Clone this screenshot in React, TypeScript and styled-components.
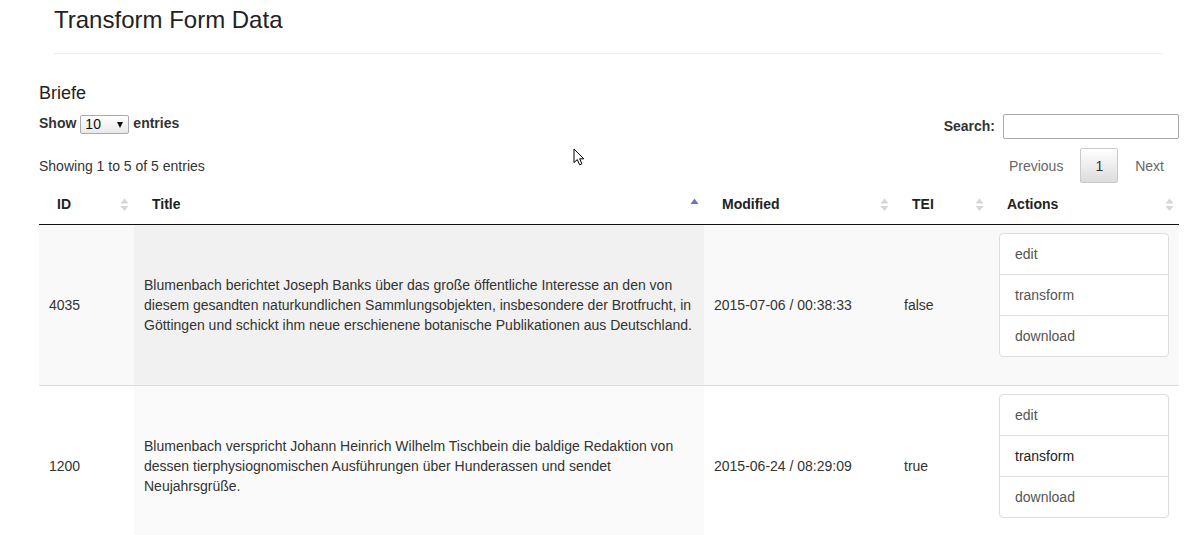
import React from "react";
import styled, { createGlobalStyle, css } from "styled-components";

const GlobalStyle = createGlobalStyle`
  html, body { margin: 0; padding: 0; background: #fff; }
  body {
    font-family: "Liberation Sans", Arial, Helvetica, sans-serif;
    font-size: 14px;
    line-height: 1.42857;
    color: #333;
  }
  * { box-sizing: border-box; }
`;

const Page = styled.div`
  position: relative;
  width: 1186px;
`;

const PageHeader = styled.header`
  margin: 0 23px 0 54px;
  padding: 7px 0 20px;
  border-bottom: 1px solid #eee;
`;

const Title = styled.h1`
  margin: 0;
  font-size: 24px;
  font-weight: 500;
  line-height: 1.1;
  color: #222;
`;

const Section = styled.section`
  padding: 0 7px 0 39px;
`;

const SectionTitle = styled.h3`
  margin: 30px 0 0;
  font-size: 18px;
  font-weight: 500;
  line-height: 1.1;
  color: #222;
`;

const ControlsRow = styled.div<{ $gap: number }>`
  display: flex;
  justify-content: space-between;
  align-items: flex-start;
  margin-top: ${(p) => p.$gap}px;
`;

const LengthLabel = styled.label`
  display: flex;
  align-items: center;
  gap: 4px;
  height: 20px;
  font-weight: bold;
`;

const SelectWrap = styled.span`
  position: relative;
  display: inline-block;
  width: 49px;
  height: 19px;
`;

const Select = styled.select`
  appearance: none;
  -webkit-appearance: none;
  width: 100%;
  height: 100%;
  margin: 0;
  padding: 0 0 0 4px;
  border: 1px solid #aaa;
  border-radius: 2px;
  background: linear-gradient(to bottom, #fff 0%, #f3f3f3 60%, #e8e8e8 100%);
  font-family: "Liberation Sans", Arial, sans-serif;
  font-size: 14px;
  font-weight: normal;
  color: #111;
  line-height: 17px;
`;

const SelectArrow = styled.span`
  position: absolute;
  right: 6px;
  top: 7px;
  width: 0;
  height: 0;
  border-left: 3.5px solid transparent;
  border-right: 3.5px solid transparent;
  border-top: 6px solid #111;
  pointer-events: none;
`;

const FilterLabel = styled.label`
  display: flex;
  align-items: center;
  height: 25px;
  font-weight: bold;
`;

const SearchInput = styled.input`
  width: 176px;
  height: 25px;
  margin: 0 0 0 8px;
  padding: 4px;
  border: 1px solid #aaa;
  border-radius: 2px;
  background: #fff;
  font: inherit;
  font-weight: normal;
`;

const Info = styled.div`
  padding-top: 8px;
  line-height: 20px;
`;

const Paginate = styled.div`
  display: flex;
  gap: 2px;
`;

const PageButton = styled.span<{ $current?: boolean }>`
  display: inline-block;
  padding: 8px 14px 6px;
  line-height: 19px;
  min-width: 21px;
  text-align: center;
  border: 1px solid transparent;
  border-radius: 2px;
  color: #666;
  ${(p) =>
    p.$current &&
    css`
      color: #333;
      border-color: #cacaca;
      background: linear-gradient(to bottom, #fff 0%, #dcdcdc 100%);
    `}
`;

const Table = styled.table`
  width: 100%;
  margin-top: 1px;
  border-collapse: separate;
  border-spacing: 0;
  table-layout: fixed;
`;

const Th = styled.th`
  padding: 10px 5px 10px 18px;
  border-bottom: 1px solid #111;
  text-align: left;
  font-weight: bold;
  line-height: 20px;
  color: #222;
`;

const HeadInner = styled.div`
  display: flex;
  align-items: center;
  justify-content: space-between;
`;

const Row = styled.tr<{ $odd: boolean }>`
  background: ${(p) => (p.$odd ? "#f9f9f9" : "#fff")};
`;

const Td = styled.td<{ $sorted?: boolean; $odd?: boolean; $first?: boolean }>`
  padding: 8px 10px;
  vertical-align: middle;
  line-height: 20px;
  border-top: ${(p) => (p.$first ? "none" : "1px solid #ddd")};
  ${(p) =>
    p.$sorted &&
    css`
      background: ${p.$odd ? "#f1f1f1" : "#fafafa"};
    `}
`;

const ActionList = styled.div`
  display: flex;
  flex-direction: column;
  margin-bottom: 20px;
`;

const ActionItem = styled.a<{ $hover?: boolean }>`
  display: block;
  padding: 10px 15px;
  border: 1px solid #ddd;
  margin-bottom: -1px;
  background: #fff;
  color: ${(p) => (p.$hover ? "#222" : "#555")};
  text-decoration: none;
  line-height: 20px;
  &:first-child {
    border-top-left-radius: 4px;
    border-top-right-radius: 4px;
  }
  &:last-child {
    margin-bottom: 0;
    border-bottom-left-radius: 4px;
    border-bottom-right-radius: 4px;
  }
`;

const CursorLayer = styled.svg`
  position: absolute;
  left: 573px;
  top: 148px;
  pointer-events: none;
`;

type SortState = "both" | "asc";

const SortIcon = ({ state }: { state: SortState }) => (
  <svg width="9" height="16" viewBox="0 0 9 16" aria-hidden="true">
    {state === "asc" ? (
      <path d="M4.5 2.5 L8.5 8 L0.5 8 Z" fill="#6f73c8" />
    ) : (
      <>
        <path d="M4.5 2.5 L8.5 7.5 L0.5 7.5 Z" fill="#d6d6d6" />
        <path d="M4.5 15 L8.5 10 L0.5 10 Z" fill="#d6d6d6" />
      </>
    )}
  </svg>
);

const columns: { label: string; width: number; sort: SortState }[] = [
  { label: "ID", width: 95, sort: "both" },
  { label: "Title", width: 570, sort: "asc" },
  { label: "Modified", width: 190, sort: "both" },
  { label: "TEI", width: 95, sort: "both" },
  { label: "Actions", width: 190, sort: "both" },
];

const rows = [
  {
    id: "4035",
    title:
      "Blumenbach berichtet Joseph Banks über das große öffentliche Interesse an den von diesem gesandten naturkundlichen Sammlungsobjekten, insbesondere der Brotfrucht, in Göttingen und schickt ihm neue erschienene botanische Publikationen aus Deutschland.",
    modified: "2015-07-06 / 00:38:33",
    tei: "false",
    hover: "",
  },
  {
    id: "1200",
    title:
      "Blumenbach verspricht Johann Heinrich Wilhelm Tischbein die baldige Redaktion von dessen tierphysiognomischen Ausführungen über Hunderassen und sendet Neujahrsgrüße.",
    modified: "2015-06-24 / 08:29:09",
    tei: "true",
    hover: "transform",
  },
];

export default function App() {
  return (
    <Page>
      <GlobalStyle />
      <PageHeader>
        <Title>Transform Form Data</Title>
      </PageHeader>
      <Section>
        <SectionTitle>Briefe</SectionTitle>
        <ControlsRow $gap={10}>
          <LengthLabel>
            Show
            <SelectWrap>
              <Select defaultValue="10">
                <option value="10">10</option>
                <option value="25">25</option>
                <option value="50">50</option>
                <option value="100">100</option>
              </Select>
              <SelectArrow />
            </SelectWrap>
            entries
          </LengthLabel>
          <FilterLabel>
            Search:
            <SearchInput type="search" />
          </FilterLabel>
        </ControlsRow>
        <ControlsRow $gap={9}>
          <Info>Showing 1 to 5 of 5 entries</Info>
          <Paginate>
            <PageButton>Previous</PageButton>
            <PageButton $current>1</PageButton>
            <PageButton>Next</PageButton>
          </Paginate>
        </ControlsRow>
        <Table>
          <colgroup>
            {columns.map((c) => (
              <col key={c.label} style={{ width: c.width }} />
            ))}
          </colgroup>
          <thead>
            <tr>
              {columns.map((c) => (
                <Th key={c.label}>
                  <HeadInner>
                    <span>{c.label}</span>
                    <SortIcon state={c.sort} />
                  </HeadInner>
                </Th>
              ))}
            </tr>
          </thead>
          <tbody>
            {rows.map((r, i) => {
              const odd = i % 2 === 0;
              const first = i === 0;
              return (
                <Row key={r.id} $odd={odd}>
                  <Td $first={first}>{r.id}</Td>
                  <Td $first={first} $sorted $odd={odd}>
                    {r.title}
                  </Td>
                  <Td $first={first}>{r.modified}</Td>
                  <Td $first={first}>{r.tei}</Td>
                  <Td $first={first}>
                    <ActionList>
                      {["edit", "transform", "download"].map((a) => (
                        <ActionItem key={a} href="#" $hover={r.hover === a}>
                          {a}
                        </ActionItem>
                      ))}
                    </ActionList>
                  </Td>
                </Row>
              );
            })}
          </tbody>
        </Table>
      </Section>
      <CursorLayer width="14" height="20" viewBox="0 0 14 20" aria-hidden="true">
        <path
          d="M1 1 L1 14.5 L4.3 11.6 L6.6 16.8 L8.9 15.8 L6.7 10.8 L10.8 10.8 Z"
          fill="#fff"
          stroke="#000"
          strokeWidth="1"
          strokeLinejoin="miter"
        />
      </CursorLayer>
    </Page>
  );
}
